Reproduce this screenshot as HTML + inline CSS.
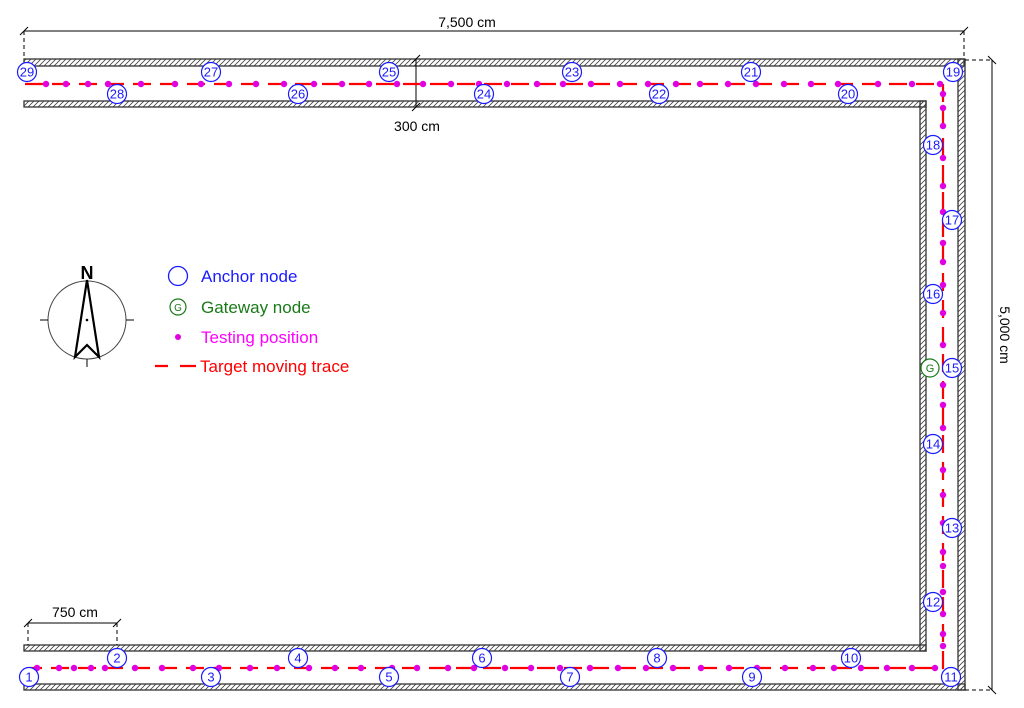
<!DOCTYPE html>
<html><head><meta charset="utf-8"><style>body{margin:0;background:#fff}svg{display:block}</style></head><body>
<svg id="s" width="1024" height="708" xmlns="http://www.w3.org/2000/svg" font-family="Liberation Sans, Arial, sans-serif">
<defs><pattern id="h" width="5" height="5" patternUnits="userSpaceOnUse"><path d="M-1,6 L6,-1 M-1,1 L1,-1 M4,6 L6,4" stroke="#444" stroke-width="0.8"/></pattern></defs>
<g stroke="#333" stroke-width="1.3" fill="url(#h)">
<rect x="24" y="59" width="940" height="7"/>
<rect x="24" y="101" width="902" height="6"/>
<rect x="958" y="59" width="7" height="631"/>
<rect x="920" y="101" width="6" height="550"/>
<rect x="24" y="645" width="902" height="6"/>
<rect x="24" y="684" width="941" height="6"/>
</g>
<g stroke="#000" stroke-width="1" fill="none">
<line x1="24" y1="31" x2="964" y2="31"/><line x1="20" y1="35" x2="28" y2="27"/><line x1="960" y1="35" x2="968" y2="27"/>
<line x1="24" y1="31" x2="24" y2="59" stroke-dasharray="4,3"/><line x1="964" y1="31" x2="964" y2="59" stroke-dasharray="4,3"/>
<line x1="992" y1="60" x2="992" y2="690"/><line x1="988" y1="56" x2="996" y2="64"/><line x1="988" y1="686" x2="996" y2="694"/>
<line x1="965" y1="60" x2="992" y2="60" stroke-dasharray="4,3"/><line x1="965" y1="690" x2="992" y2="690" stroke-dasharray="4,3"/>
<line x1="416" y1="59" x2="416" y2="107"/><line x1="412" y1="63" x2="420" y2="55"/><line x1="412" y1="111" x2="420" y2="103"/>
<line x1="28" y1="623" x2="117" y2="623"/><line x1="24" y1="627" x2="32" y2="619"/><line x1="113" y1="627" x2="121" y2="619"/>
<line x1="28" y1="623" x2="28" y2="645" stroke-dasharray="4,3"/><line x1="117" y1="623" x2="117" y2="645" stroke-dasharray="4,3"/>
</g>
<g font-size="14" fill="#000">
<text x="467" y="27" text-anchor="middle">7,500 cm</text>
<text x="417" y="131" text-anchor="middle">300 cm</text>
<text x="75" y="617" text-anchor="middle">750 cm</text>
<text transform="translate(1000,335) rotate(90)" text-anchor="middle">5,000 cm</text>
</g>
<path d="M25,84 H943 V668 H30" stroke="#f00" stroke-width="2.2" fill="none" stroke-dasharray="18,9"/>
<g id="dots" fill="#e000e0"></g>
<g id="anc" fill="#fff" stroke="#1a1aff" stroke-width="1.2" font-size="13"></g>
<g stroke="#000" fill="none">
<circle cx="87" cy="320" r="39" stroke="#444"/>
<line x1="40" y1="320" x2="48" y2="320"/><line x1="126" y1="320" x2="134" y2="320"/><line x1="87" y1="359" x2="87" y2="367"/>
<path d="M87,280 L75,357 L87,345 L99,357 Z" stroke-width="2.2"/>
</g>
<circle cx="87" cy="320" r="1.3"/>
<text x="87" y="279" font-size="18" font-weight="bold" text-anchor="middle">N</text>
<circle cx="178" cy="276" r="9.5" fill="none" stroke="#1a1aff" stroke-width="1.3"/>
<text x="201" y="282" font-size="17" fill="#1a1aff">Anchor node</text>
<circle cx="178" cy="307" r="8" fill="none" stroke="#1a7a1a" stroke-width="1.2"/>
<text x="178" y="311" font-size="10" fill="#1a7a1a" text-anchor="middle">G</text>
<text x="201" y="313" font-size="17" fill="#1a7a1a">Gateway node</text>
<circle cx="178" cy="337" r="3" fill="#e000e0"/>
<text x="201" y="343" font-size="17" fill="#ff00ff">Testing position</text>
<path d="M155,366 H168 M180,366 H196" stroke="#f00" stroke-width="2.2"/>
<text x="200" y="372" font-size="17" fill="#ff0000">Target moving trace</text>
<circle cx="930" cy="368" r="9" fill="#fff" stroke="#1a7a1a" stroke-width="1.2"/>
<text x="930" y="372" font-size="11" fill="#1a7a1a" text-anchor="middle">G</text>
</svg>
<script>
var NS="http://www.w3.org/2000/svg",d=document.getElementById('dots'),a=document.getElementById('anc');
function dot(x,y){var c=document.createElementNS(NS,'circle');c.setAttribute('cx',x);c.setAttribute('cy',y);c.setAttribute('r',3.2);d.appendChild(c);}
var tx=[46,66,88,108,141,175,201,229,256,284,314,342,369,397,423,451,479,507,537,563,591,620,648,676,700,728,756,784,811,838,878,912,940];
tx.forEach(function(x){dot(x,84)});
var bx=[37,59,74,91,105,135,162,193,219,250,277,309,335,361,392,417,448,474,505,531,560,590,618,646,673,701,729,757,785,813,834,861,887,912,935];
bx.forEach(function(x){dot(x,668)});
var vy=[94,108,126,158,186,212,243,262,285,313,345,385,405,428,470,495,523,552,566,592,614,634,646];
vy.forEach(function(y){dot(943,y)});
var A=[[29,27,72],[28,117,94],[27,211,72],[26,298,94],[25,389,72],[24,484,94],[23,572,72],[22,659,94],[21,751,72],[20,848,94],[19,953,72],
[18,933,145],[17,952,220],[16,933,294],[15,952,368],[14,933,444],[13,952,528],[12,933,602],[11,951,677],
[1,29,677],[2,117,658],[3,211,677],[4,298,658],[5,389,677],[6,482,658],[7,570,677],[8,657,658],[9,752,677],[10,851,658]];
A.forEach(function(p){var c=document.createElementNS(NS,'circle');c.setAttribute('cx',p[1]);c.setAttribute('cy',p[2]);c.setAttribute('r',9.5);a.appendChild(c);
var t=document.createElementNS(NS,'text');t.setAttribute('x',p[1]);t.setAttribute('y',p[2]+4.5);t.setAttribute('text-anchor','middle');t.setAttribute('fill','#1a1aff');t.setAttribute('stroke','none');t.textContent=p[0];a.appendChild(t);});
</script>
</body></html>
